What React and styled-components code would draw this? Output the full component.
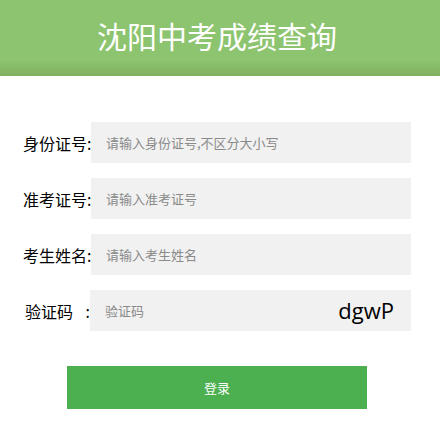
import React from "react";
import styled, { createGlobalStyle } from "styled-components";

const GlobalStyle = createGlobalStyle`
  body {
    margin: 0;
    background: #fff;
    font-family: "Noto Sans CJK SC", "Noto Sans", sans-serif;
  }
`;

const Header = styled.div`
  height: 76px;
  background: linear-gradient(to bottom, #8dc46f 0%, #8dc46f 78%, #80b062 100%);
  display: flex;
  align-items: center;
  justify-content: center;
`;

const Title = styled.h1`
  margin: 0 0 6px -6px;
  color: #fff;
  font-size: 30px;
  font-weight: 400;
  letter-spacing: 0;
`;

const Form = styled.div`
  padding: 46px 0 0 23px;
  display: flex;
  flex-direction: column;
  gap: 15px;
`;

const Row = styled.div`
  display: flex;
  align-items: center;
`;

const Label = styled.label`
  width: ${(p) => (p.$spread ? "65px" : "68px")};
  margin-left: ${(p) => (p.$spread ? "2px" : "0")};
  display: flex;
  justify-content: space-between;
  font-size: 16px;
  color: #000;
  white-space: nowrap;
`;

const Field = styled.div`
  width: 320px;
  height: 41px;
  background: #f1f1f1;
  display: flex;
  align-items: center;
  justify-content: space-between;
  padding: 0 17px 0 15px;
  box-sizing: border-box;
`;

const Input = styled.input`
  flex: 1;
  border: none;
  outline: none;
  background: transparent;
  font-family: "Noto Sans CJK SC", "Noto Sans", sans-serif;
  font-size: 13px;
  color: #333;
  padding: 0;
  &::placeholder {
    color: #8a8a8a;
  }
`;

const Captcha = styled.span`
  font-family: "Open Sans", "Noto Sans", sans-serif;
  font-size: 22px;
  color: #000;
  margin-top: -2px;
`;

const Button = styled.button`
  margin: 35px 0 0 67px;
  width: 300px;
  height: 43px;
  border: none;
  background: #4caf50;
  color: #fff;
  font-family: "Noto Sans CJK SC", "Noto Sans", sans-serif;
  font-size: 13px;
  cursor: pointer;
`;

const rows = [
  { label: "身份证号:", ph: "请输入身份证号,不区分大小写" },
  { label: "准考证号:", ph: "请输入准考证号" },
  { label: "考生姓名:", ph: "请输入考生姓名" },
];

export default function App() {
  return (
    <>
      <GlobalStyle />
      <Header>
        <Title>沈阳中考成绩查询</Title>
      </Header>
      <Form>
        {rows.map((r) => (
          <Row key={r.label}>
            <Label>{r.label}</Label>
            <Field>
              <Input placeholder={r.ph} />
            </Field>
          </Row>
        ))}
        <Row>
          <Label $spread>
            <span>验证码</span>
            <span>:</span>
          </Label>
          <Field style={{ width: 321 }}>
            <Input placeholder="验证码" />
            <Captcha>dgwP</Captcha>
          </Field>
        </Row>
      </Form>
      <Button>登录</Button>
    </>
  );
}
